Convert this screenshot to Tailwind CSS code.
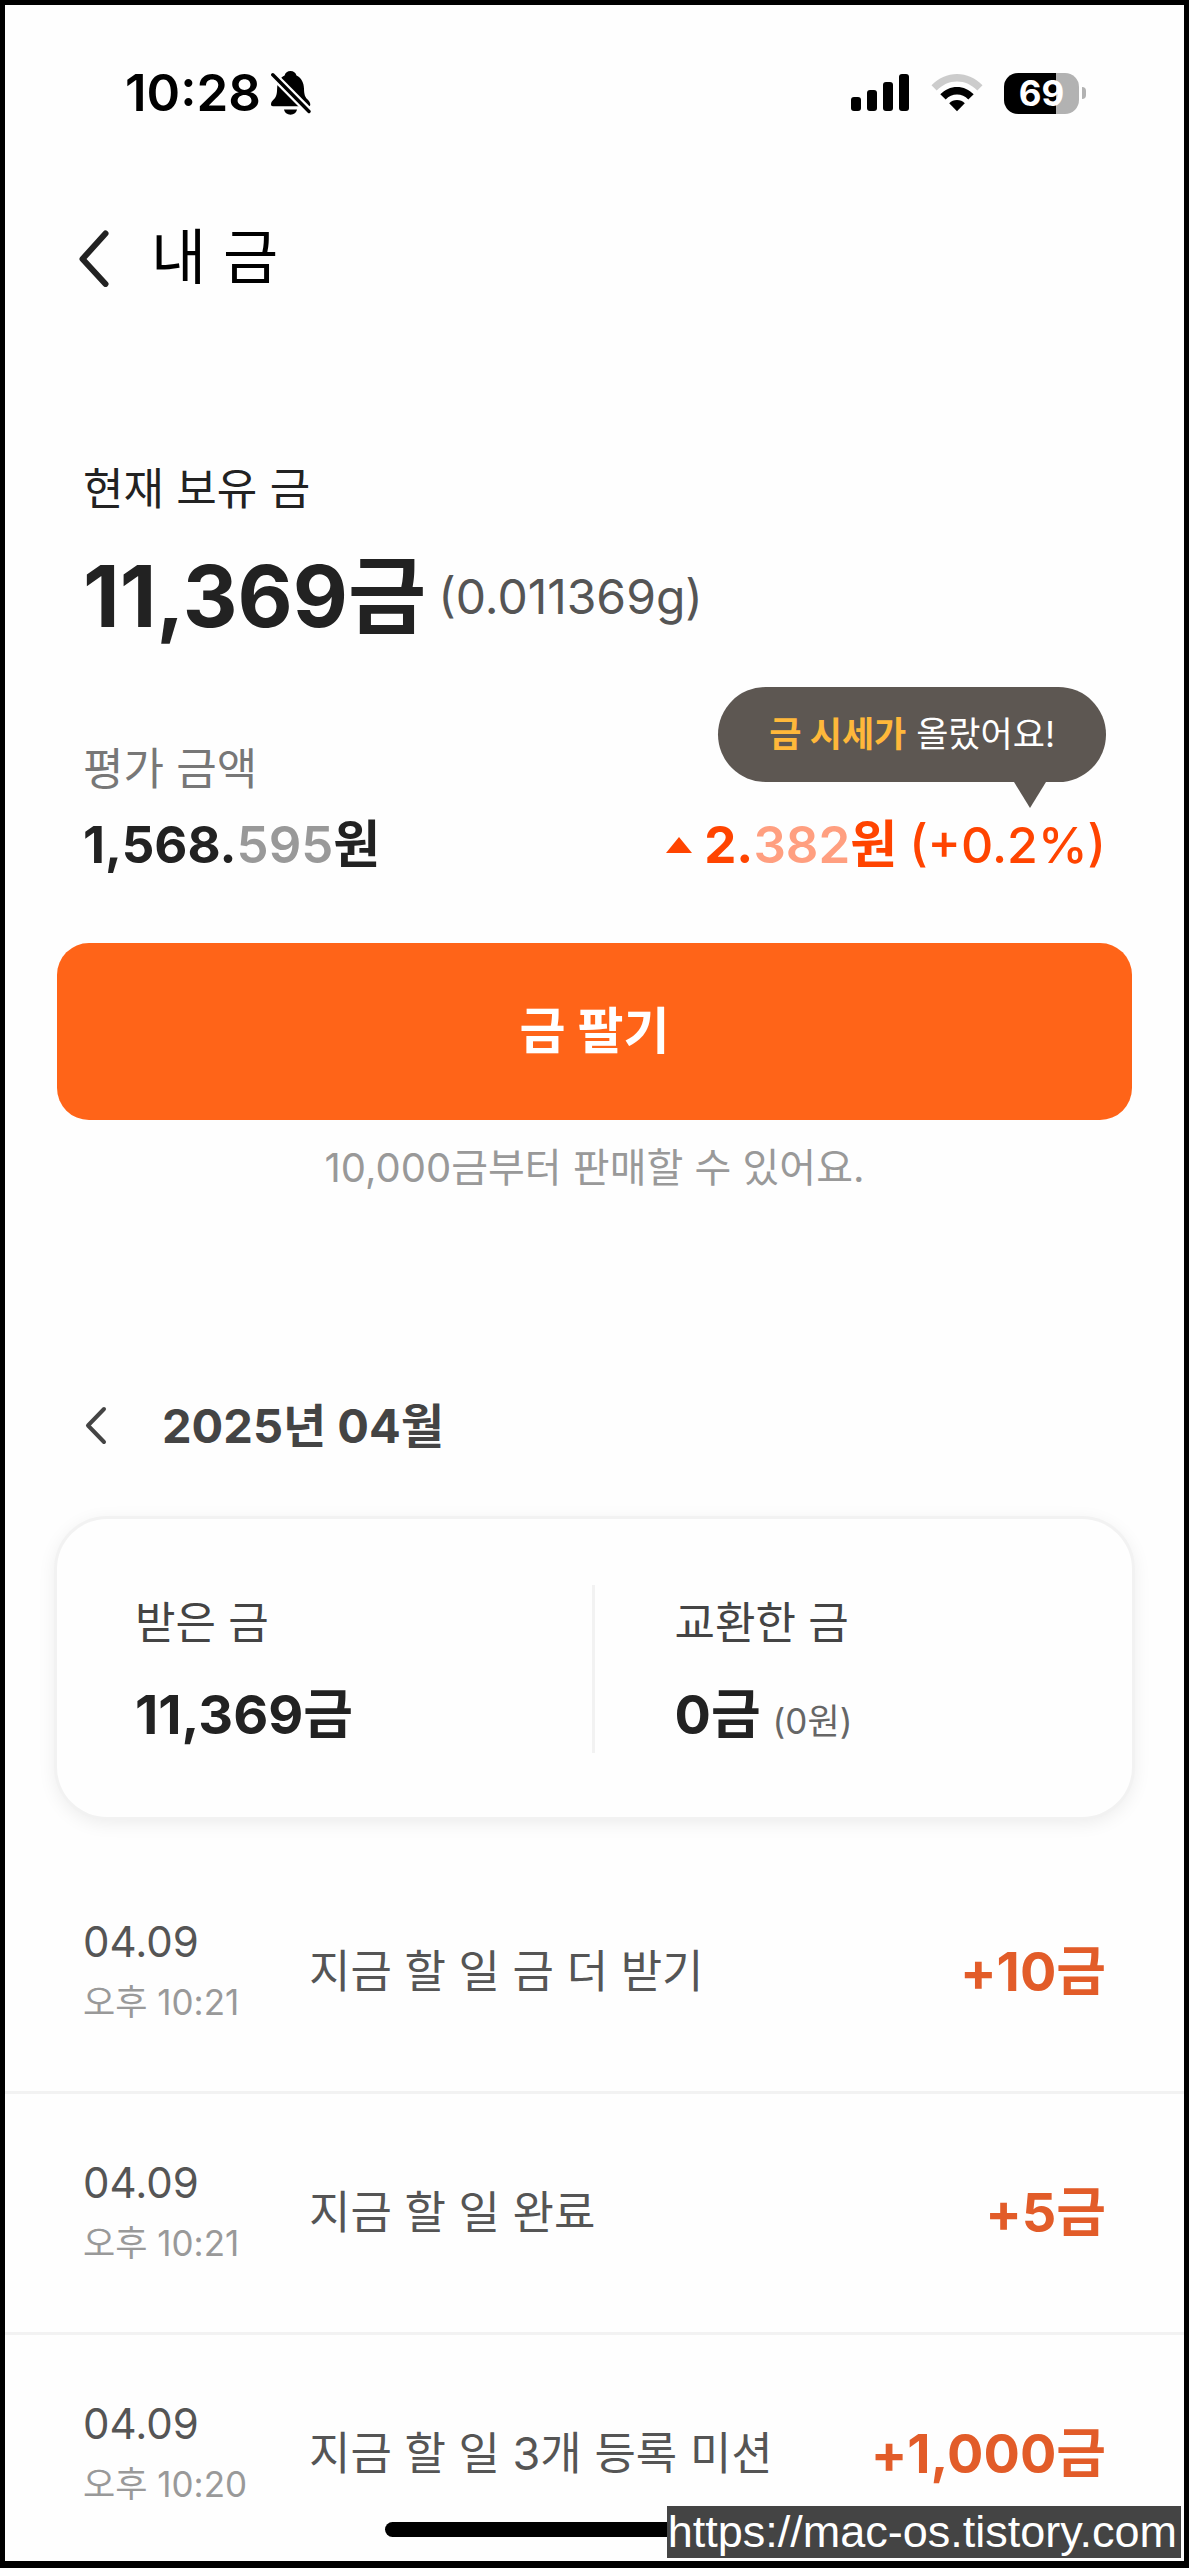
<!DOCTYPE html>
<html lang="ko">
<head>
<meta charset="utf-8">
<meta name="viewport" content="width=device-width, initial-scale=1">
<title>내 금</title>
<script src="https://cdn.jsdelivr.net/npm/@tailwindcss/browser@4"></script>
</head>
<body class="bg-[#fefefe] font-['Inter','Noto_Sans_CJK_KR',sans-serif] text-[#222]">
<div class="relative min-h-screen border-[5px] border-b-[7px] border-black">

  <!-- Status bar -->
  <div class="flex items-center justify-between pt-[60px] pl-[120px] pr-[98px] text-black">
    <div class="flex items-center gap-[10px]">
      <span class="text-[51px] leading-[56px] font-semibold">10:28</span>
      <svg class="h-[44px] w-[40px]" viewBox="0 0 40 44" aria-label="무음">
        <path d="M19.500 0c3 0 5.200 1.700 6 4.400 5.200 2.600 7.300 7.300 7.500 13.300.1 6.300 1.300 8.500 3.600 10.800 1.700 1.700 2.700 3 2.700 5.300 0 .9-.6 1.500-1.600 1.500H1.900c-1.200 0-1.900-.7-1.900-1.700 0-2.200 1-3.500 2.600-5.100C5 26 6 24 6.100 17.700 6.300 11.700 8.500 7 13.600 4.400 14.300 1.700 16.500 0 19.500 0Z"/>
        <path d="M13 38.500h13c-.5 3-3.200 5.200-6.500 5.200S13.500 41.500 13 38.500Z"/>
        <path d="M1.500 3.500 38.500 41" stroke="#fefefe" stroke-width="8" fill="none"/>
        <path d="M1.800 3.800 38 40.500" stroke="#000" stroke-width="3.400" stroke-linecap="round" fill="none"/>
      </svg>
    </div>
    <div class="flex items-center">
      <svg class="h-[38px] w-[58px]" viewBox="0 0 58 38" aria-label="신호">
        <rect x="0" y="23" width="10" height="14" rx="3"/><rect x="16" y="16" width="10" height="21" rx="3"/>
        <rect x="32" y="8" width="10" height="29" rx="3"/><rect x="48" y="0" width="10" height="37" rx="3"/>
      </svg>
      <svg class="ml-[22px] h-[38px] w-[52px]" viewBox="0 0 52 38" aria-label="와이파이">
        <path d="M.5 11.200C7.500 4 16.400 0 26 0s18.500 4 25.500 11.200L46.300 16.500C40.800 10.800 33.700 7.500 26 7.500S11.200 10.800 5.700 16.500Z" fill="#ccc"/>
        <path d="M9.300 20.300C13.900 15.600 19.600 13 26 13s12.100 2.600 16.700 7.300l-5.400 5.300C34.200 22.400 30.300 20.600 26 20.600s-8.200 1.800-11.300 5Z"/>
        <path d="M18.200 29.200C20.400 27.100 23 26 26 26s5.600 1.100 7.800 3.200L26 37.200Z"/>
      </svg>
      <div class="ml-[21px] flex h-[41px] w-[75px] items-center justify-center rounded-[14px] bg-linear-to-r from-black from-70% to-[#b2b2b2] to-70% text-[35px] leading-[41px] font-bold text-white">69</div>
      <div class="ml-[3px] h-[12px] w-[4px] rounded-r-full bg-[#b2b2b2]"></div>
    </div>
  </div>

  <!-- Title bar -->
  <header class="mt-[100px] flex items-center gap-[42px] pl-[72px]">
    <button type="button" aria-label="뒤로">
      <svg class="block h-[60px] w-[32px]" viewBox="0 0 32 60" fill="none" stroke="#222" stroke-width="6" stroke-linecap="round" stroke-linejoin="round"><path d="M28.500 6.500 5.500 32 28.500 57"/></svg>
    </button>
    <h1 class="text-[60px] leading-[72px] text-black">내 금</h1>
  </header>

  <main>
    <section class="mt-[168px] px-[78px]">
      <h2 class="text-[44px] leading-[56px]">현재 보유 금</h2>
      <p class="mt-8 flex items-center gap-3 leading-[96px]">
        <strong class="text-[85px] font-bold">11,369금</strong>
        <span class="text-[48px] text-[#555]">(0.011369g)</span>
      </p>
      <div class="relative mt-24 flex items-end justify-between">
        <div>
          <h3 class="text-[44px] leading-[56px] text-[#777]">평가 금액</h3>
          <p class="mt-5 text-[51px] leading-[56px] font-bold">1,568.<span class="font-semibold text-[#999]">595</span>원</p>
        </div>
        <p class="flex items-center text-[51px] leading-[56px] text-[#ff4400]">
          <svg class="mr-3 h-[16px] w-[26px]" viewBox="0 0 26 16" fill="#ff4400"><path d="M13 0 26 16H0Z"/></svg>
          <span class="mr-3 font-bold">2.<span class="font-semibold text-[#ff9f80]">382</span>원</span>
          <span class="text-[50px] font-medium">(+0.2%)</span>
        </p>
        <div class="absolute right-0 bottom-[91px] rounded-full bg-[#5d5752] px-[51px] py-[20px] text-[35px] leading-[55px] whitespace-nowrap text-white" role="status">
          <b class="font-bold text-[#ffb83a]">금 시세가</b> 올랐어요!
          <svg class="absolute top-full right-[60px] h-[26px] w-[32px]" viewBox="0 0 32 26" fill="#5d5752"><path d="M0 0H32L16 26Z"/></svg>
        </div>
      </div>
    </section>

    <section class="mt-[70px] px-[52px]">
      <button type="button" class="block w-full rounded-[32px] bg-[#ff6418] py-[60px] text-[50px] leading-[57px] font-bold text-white">금 팔기</button>
      <p class="mt-5 text-center text-[40px] leading-[56px] text-[#999]">10,000금부터 판매할 수 있어요.</p>
    </section>

    <section class="mt-[202px] px-[52px]">
      <div class="flex items-center gap-[52px] pl-[27px]">
        <button type="button" aria-label="이전 달">
          <svg class="block h-[40px] w-[26px]" viewBox="0 0 26 40" fill="none" stroke="#444" stroke-width="4" stroke-linecap="round" stroke-linejoin="round"><path d="M20 3 4 19.500 20 36"/></svg>
        </button>
        <h2 class="text-[47px] leading-[56px] font-bold text-[#444]">2025년 04월</h2>
      </div>
      <div class="mt-[65px] grid grid-cols-2 rounded-[50px] bg-[#fefefe] pt-[66px] pb-[64px] shadow-[0_0_0_3px_#f2f2f2,0_4px_20px_rgba(0,0,0,0.09)]">
        <div class="border-r-[3px] border-[#f2f2f2] pt-[10px] pb-[6px] pl-[78px]">
          <h3 class="text-[44px] leading-[56px] text-[#444]">받은 금</h3>
          <p class="mt-8 text-[54px] leading-[64px] font-bold">11,369금</p>
        </div>
        <div class="pt-[10px] pb-[6px] pl-[80px]">
          <h3 class="text-[44px] leading-[56px] text-[#444]">교환한 금</h3>
          <p class="mt-8 flex items-baseline gap-3 text-[54px] leading-[64px] font-bold">0금 <span class="text-[35px] leading-[40px] font-normal text-[#666]">(0원)</span></p>
        </div>
      </div>
    </section>

    <ul class="mt-[36px] divide-y-[3px] divide-[#f2f2f2]">
      <li class="flex items-center px-[78px] py-[65px]">
        <div class="w-[226px] text-[#555]">
          <p class="text-[42px] leading-[48px]">04.09</p>
          <p class="mt-3 text-[35px] leading-[48px] text-[#999]">오후 10:21</p>
        </div>
        <p class="flex-1 text-[45px] leading-[56px] text-[#555]">지금 할 일 금 더 받기</p>
        <strong class="text-[54px] leading-[64px] font-bold text-[#e25c29]">+10금</strong>
      </li>
      <li class="flex items-center px-[78px] py-[65px]">
        <div class="w-[226px] text-[#555]">
          <p class="text-[42px] leading-[48px]">04.09</p>
          <p class="mt-3 text-[35px] leading-[48px] text-[#999]">오후 10:21</p>
        </div>
        <p class="flex-1 text-[45px] leading-[56px] text-[#555]">지금 할 일 완료</p>
        <strong class="text-[54px] leading-[64px] font-bold text-[#e25c29]">+5금</strong>
      </li>
      <li class="flex items-center px-[78px] pt-[65px] pb-[48px]">
        <div class="w-[226px] text-[#555]">
          <p class="text-[42px] leading-[48px]">04.09</p>
          <p class="mt-3 text-[35px] leading-[48px] text-[#999]">오후 10:20</p>
        </div>
        <p class="flex-1 text-[45px] leading-[56px] text-[#555]">지금 할 일 3개 등록 미션</p>
        <strong class="text-[54px] leading-[64px] font-bold text-[#e25c29]">+1,000금</strong>
      </li>
    </ul>
  </main>

  <!-- Home indicator and site address over the list -->
  <div class="absolute bottom-[24px] left-1/2 h-[15px] w-[420px] -translate-x-1/2 rounded-full bg-black"></div>
  <a href="https://mac-os.tistory.com" class="absolute right-[3px] bottom-[3px] bg-[#444] pr-[4px] pl-px font-['Liberation_Sans',sans-serif] text-[45px] leading-[52px] text-white">https://mac-os.tistory.com</a>
</div>
</body>
</html>
